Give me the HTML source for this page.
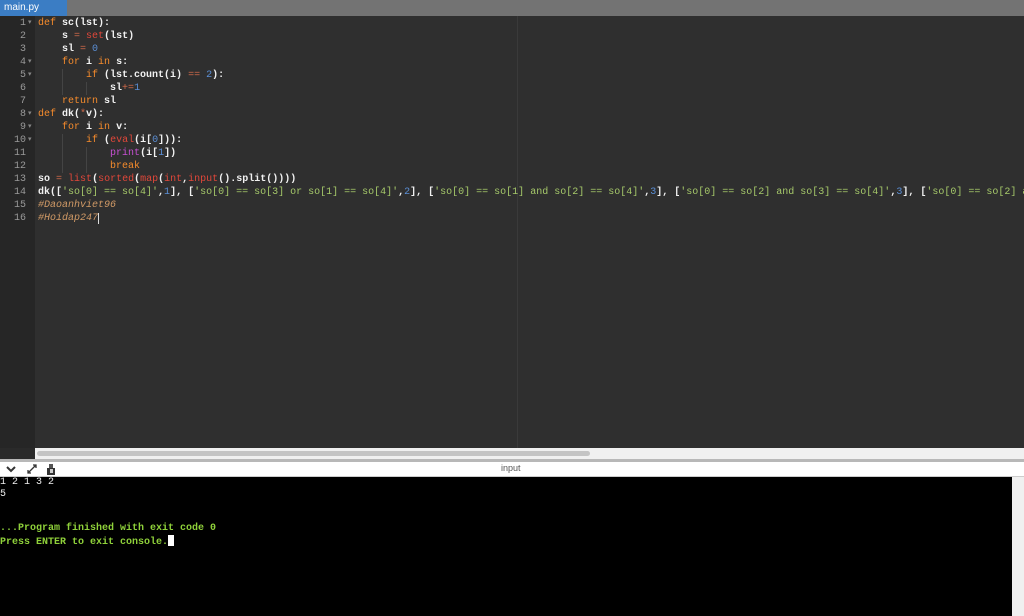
<!DOCTYPE html>
<html><head><meta charset="utf-8"><style>
*{margin:0;padding:0;box-sizing:border-box}
body{width:1024px;height:616px;overflow:hidden;background:#2f2f2f;position:relative;font-family:"Liberation Mono",monospace}
#tabbar{position:absolute;left:0;top:0;width:1024px;height:16px;background:#737373}
#tab{position:absolute;left:0;top:0;width:67px;height:16px;background:#3b7dc4;color:#fff;font:10px "Liberation Sans",sans-serif;padding:2px 0 0 4px}
#gutter{position:absolute;left:0;top:17px;width:35px;height:431px;background:#262626}
#gtop{position:absolute;left:0;top:16px;width:35px;height:1px;background:#262626}
#ed{position:absolute;left:35px;top:16px;width:989px;height:432px;background:#2f2f2f;overflow:hidden}
#margin{position:absolute;left:517px;top:16px;width:1px;height:432px;background:#3a3a3a}
.ln{position:absolute;left:0;width:26px;text-align:right;color:#9a9a9a;font-size:10px;line-height:13px}
.fold{position:absolute;left:28px;color:#888;font-size:7px;line-height:13px}
pre{position:absolute;left:38px;top:17px;font:10px/13px "Liberation Mono",monospace;color:#f2f2f2;white-space:pre;font-weight:bold}
.k{color:#f58b2c;font-weight:normal}.b{color:#e1473a;font-weight:normal}.p{color:#c64fd2;font-weight:normal}.o{color:#d06a4a;font-weight:normal}.n{color:#5b8fd6;font-weight:normal}.s{color:#a6c96a;font-weight:normal}.c{color:#d19a66;font-style:italic;font-weight:normal}
.g{display:inline-block;width:0;border-left:1px solid #444;height:13px;vertical-align:top;margin-right:-1px}
#hs{position:absolute;left:35px;top:448px;width:989px;height:11px;background:#f0f0f0}
#thumb{position:absolute;left:37px;top:451px;width:553px;height:5px;background:#c4c4c4;border-radius:3px}
#sep{position:absolute;left:0;top:459px;width:1024px;height:3px;background:#b8b8b8}
#gb{position:absolute;left:0;top:448px;width:35px;height:11px;background:#2a2a2a}
#hdr{position:absolute;left:0;top:462px;width:1024px;height:15px;background:#fff;border-bottom:1px solid #ccc}
#hdr .t{position:absolute;left:501px;top:1px;font:9px "Liberation Sans",sans-serif;color:#555}
#con{position:absolute;left:0;top:477px;width:1012px;height:139px;background:#000;font:10px/11.6px "Liberation Mono",monospace;color:#eee;white-space:pre;padding-top:0}
#vs{position:absolute;left:1012px;top:477px;width:12px;height:139px;background:#f0f0f0}
.gr{color:#8fd13a;font-weight:bold}
.cur{display:inline-block;width:6px;height:11px;background:#fff;vertical-align:-2px}
</style></head><body>
<div id="tabbar"><div id="tab">main.py</div></div>
<div id="gutter">
<div class="ln" style="top:0">1</div><div class="ln" style="top:13px">2</div><div class="ln" style="top:26px">3</div><div class="ln" style="top:39px">4</div><div class="ln" style="top:52px">5</div><div class="ln" style="top:65px">6</div><div class="ln" style="top:78px">7</div><div class="ln" style="top:91px">8</div><div class="ln" style="top:104px">9</div><div class="ln" style="top:117px">10</div><div class="ln" style="top:130px">11</div><div class="ln" style="top:143px">12</div><div class="ln" style="top:156px">13</div><div class="ln" style="top:169px">14</div><div class="ln" style="top:182px">15</div><div class="ln" style="top:195px">16</div>
<div class="fold" style="top:0">▾</div><div class="fold" style="top:39px">▾</div><div class="fold" style="top:52px">▾</div><div class="fold" style="top:91px">▾</div><div class="fold" style="top:104px">▾</div><div class="fold" style="top:117px">▾</div>
</div>
<div id="gtop"></div>
<div id="ed"></div>
<div id="margin"></div>
<pre><span class="k">def</span> sc(lst):
    s <span class="o">=</span> <span class="b">set</span>(lst)
    sl <span class="o">=</span> <span class="n">0</span>
    <span class="k">for</span> i <span class="k">in</span> s:
    <span class="g"></span>    <span class="k">if</span> (lst.count(i) <span class="o">==</span> <span class="n">2</span>):
    <span class="g"></span>    <span class="g"></span>    sl<span class="o">+=</span><span class="n">1</span>
    <span class="k">return</span> sl
<span class="k">def</span> dk(<span class="o">*</span>v):
    <span class="k">for</span> i <span class="k">in</span> v:
    <span class="g"></span>    <span class="k">if</span> (<span class="b">eval</span>(i[<span class="n">0</span>])):
    <span class="g"></span>    <span class="g"></span>    <span class="p">print</span>(i[<span class="n">1</span>])
    <span class="g"></span>    <span class="g"></span>    <span class="k">break</span>
so <span class="o">=</span> <span class="b">list</span>(<span class="b">sorted</span>(<span class="b">map</span>(<span class="b">int</span>,<span class="b">input</span>().split())))
dk([<span class="s">'so[0] == so[4]'</span>,<span class="n">1</span>], [<span class="s">'so[0] == so[3] or so[1] == so[4]'</span>,<span class="n">2</span>], [<span class="s">'so[0] == so[1] and so[2] == so[4]'</span>,<span class="n">3</span>], [<span class="s">'so[0] == so[2] and so[3] == so[4]'</span>,<span class="n">3</span>], [<span class="s">'so[0] == so[2] and</span>
<span class="c">#Daoanhviet96</span>
<span class="c">#Hoidap247</span><span style="border-left:1px solid #ddd;font-weight:normal"></span></pre>
<div id="gb"></div>
<div id="hs"></div><div id="thumb"></div>
<div id="sep"></div>
<div id="hdr">
<svg style="position:absolute;left:6px;top:4px" width="10" height="7"><path d="M1 1 L5 5 L9 1" stroke="#333" stroke-width="2" fill="none"/></svg>
<svg style="position:absolute;left:27px;top:2px" width="10" height="10"><path d="M1 9 L9 1 M6 1 L9 1 L9 4 M1 6 L1 9 L4 9" stroke="#333" stroke-width="1.3" fill="none"/></svg>
<svg style="position:absolute;left:46px;top:2px" width="10" height="11"><rect x="3" y="0" width="4" height="4" fill="#555"/><rect x="1" y="4" width="8" height="7" fill="#333"/><rect x="4" y="5" width="3" height="4" fill="#ccc"/></svg>
<span class="t">input</span></div>
<div id="con">1 2 1 3 2
5


<span class="gr">...Program finished with exit code 0
Press ENTER to exit console.</span><span class="cur"></span></div>
<div id="vs"></div>
</body></html>
